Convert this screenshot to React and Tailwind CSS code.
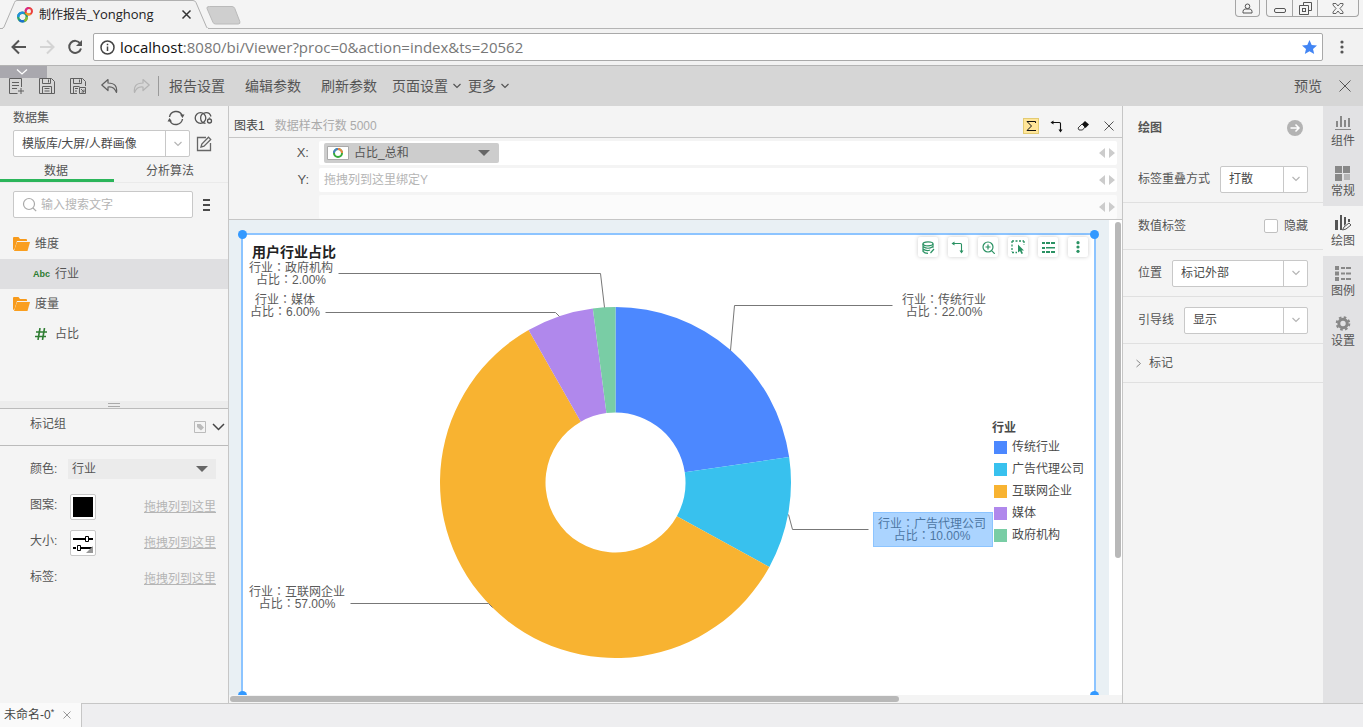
import { useState } from 'react';

const slices = [
  { name: '传统行业', value: 22, color: '#4c88ff' },
  { name: '广告代理公司', value: 10, color: '#38c1ee' },
  { name: '互联网企业', value: 57, color: '#f8b331' },
  { name: '媒体', value: 6, color: '#b088ec' },
  { name: '政府机构', value: 2, color: '#79cda5' },
];

// label anchors and leader lines, in chart coordinates
const labels = [
  { name: '传统行业', value: '22.00%', x: 701, y: 69, line: '649,70 491,70 487,115' },
  { name: '广告代理公司', value: '10.00%', x: 689, y: 293, line: '625,294 549,294 545,279', active: true },
  { name: '互联网企业', value: '57.00%', x: 54, y: 361, line: '107,368 245,368 249,372' },
  { name: '媒体', value: '6.00%', x: 42, y: 69, line: '82,77 312,77 316,81' },
  { name: '政府机构', value: '2.00%', x: 48, y: 37, line: '95,38 357,38 361,72' },
];

const CX = 372.5;
const CY = 247.5;
const OUTER = 175.5;
const INNER = 70;

const point = (radius, turn) => {
  const a = turn * Math.PI * 2;
  return `${CX + radius * Math.sin(a)},${CY - radius * Math.cos(a)}`;
};

const buildArcs = () => {
  const total = slices.reduce((sum, s) => sum + s.value, 0);
  let start = 0;
  return slices.map((s) => {
    const end = start + s.value / total;
    const large = end - start > 0.5 ? 1 : 0;
    const d = `M${point(OUTER, start)} A${OUTER},${OUTER} 0 ${large} 1 ${point(OUTER, end)} L${point(INNER, end)} A${INNER},${INNER} 0 ${large} 0 ${point(INNER, start)} Z`;
    start = end;
    return { ...s, d };
  });
};

const Svg = ({ w = 16, h = w, className = '', children, ...rest }) => (
  <svg
    width={w}
    height={h}
    viewBox={`0 0 ${w} ${h}`}
    fill="none"
    stroke="currentColor"
    className={`shrink-0 ${className}`}
    aria-hidden="true"
    {...rest}
  >
    {children}
  </svg>
);

const Chevron = ({ className = '' }) => (
  <Svg w={10} h={6} className={className}>
    <path d="M1.5 1 5 4.5 8.5 1" strokeWidth="1.2" />
  </Svg>
);

const Caret = () => (
  <Svg w={12} h={6} className="text-[#666]">
    <path d="M0 0h12L6 6z" fill="currentColor" stroke="none" />
  </Svg>
);

const Cross = ({ size = 14, className = '' }) => (
  <Svg w={size} className={className}>
    <path d={`M1.5 1.5 ${size - 1.5} ${size - 1.5}M${size - 1.5} 1.5 1.5 ${size - 1.5}`} />
  </Svg>
);

const SwapIcon = ({ className = '' }) => (
  <Svg w={14} className={className}>
    <path d="M2 3.5h7.5q1 0 1 1v7" strokeWidth="1.1" />
    <path d="M3.500 1.500v4L.5 3.5zM8.500 10.500h4l-2 3z" fill="currentColor" stroke="none" />
  </Svg>
);

const Select = ({ id, value, className = '' }) => (
  <span className={`flex h-[27px] border border-[#c8c8c8] rounded-xs bg-white ${className}`}>
    <select id={id} className="appearance-none flex-1 min-w-0 pl-2 bg-transparent outline-none text-[#4a4a4a]">
      <option>{value}</option>
    </select>
    <span className="w-6 border-l border-[#c8c8c8] flex items-center justify-center text-[#b5b5b5]">
      <Chevron />
    </span>
  </span>
);

const BrowserBar = () => (
  <header className="bg-[#f4f4f4] text-[#222] font-['Open_Sans','Noto_Sans_CJK_SC',sans-serif]">
    <div className="flex items-start h-[29px] border-b border-[#b4b4b4]">
      <div className="relative w-[210px] h-[29px] shrink-0">
        <svg width="210" height="29" viewBox="0 0 210 29" className="absolute top-0 left-0" aria-hidden="true">
          <path d="M0 28.500H1.500Q3.500 28.500 4 27L14.500 2.500Q15 .5 17 .5H193Q195 .5 196 2.500L206.500 27Q207 28.500 209 28.500" fill="#f2f2f2" stroke="#b0b0b0" />
          <path d="M3 28.500H208" stroke="#f2f2f2" />
        </svg>
        <div className="relative flex items-center h-[29px] pl-4 pr-[18px]">
          <Svg w={18} className="mr-[5px]" strokeWidth="2.400">
            <circle cx="6.500" cy="11" r="4.300" stroke="#2aa36b" />
            <path d="M2.200 11a4.300 4.300 0 0 1 6-4" stroke="#1f8fe0" />
            <path d="M3.500 14a4.300 4.300 0 0 0 5 .8" stroke="#1b6fd0" />
            <path d="M10.800 11a4.300 4.300 0 0 1-2.500 4" stroke="#8dbb34" />
            <circle cx="12.800" cy="5.200" r="3.200" stroke="#ea3f3f" strokeWidth="2" />
            <path d="M10 6.800a3.200 3.200 0 0 0 4.500 1.200" stroke="#f6a21c" strokeWidth="2" />
            <path d="M9.600 5.200a3.200 3.200 0 0 1 3.200-3.200" stroke="#d6278c" strokeWidth="2" />
          </Svg>
          <span className="flex-1 text-[13px] whitespace-nowrap">
            <span className="text-xs">制作报告</span>_Yonghong
          </span>
          <button aria-label="关闭标签页"><Cross size={11} className="text-[#333] [stroke-width:1.5]" /></button>
        </div>
      </div>
      <button aria-label="新标签页" className="-ml-1 mt-[6px]">
        <Svg w={36} h={19}>
          <path d="M3.500.5H26q2 0 2.800 2l5 13q.7 2.500-1.500 2.500H9.500q-2 0-2.700-2L1 2.500Q.5.5 3 .5z" fill="#cfcfcf" stroke="#bababa" />
        </Svg>
      </button>
      <div className="ml-auto flex text-[#555]">
        <button aria-label="用户" className="w-[25px] h-[17px] mr-[6px] border border-t-0 border-[#a5a5a5] rounded-b flex justify-center items-center">
          <Svg w={11}>
            <circle cx="5.500" cy="3.300" r="2.300" />
            <path d="M1 10V8.500q0-2 2-2.500h5q2 .5 2 2.500V10z" />
          </Svg>
        </button>
        <div className="flex h-[17px] mr-1 border border-t-0 border-[#a5a5a5] rounded-b">
          <button aria-label="最小化" className="w-[25px] flex justify-center items-center pt-1">
            <Svg w={12} h={5}><rect x=".5" y=".5" width="11" height="4" rx="1.500" /></Svg>
          </button>
          <button aria-label="还原" className="w-[25px] border-l border-[#a5a5a5] flex justify-center items-center">
            <Svg w={13}>
              <path d="M4.500 3.500v-3h8v8h-3M.5 3.500h9v9h-9z" />
              <rect x="3.500" y="6.500" width="3" height="3" />
            </Svg>
          </button>
          <button aria-label="关闭窗口" className="w-[41px] border-l border-[#a5a5a5] flex justify-center items-center">
            <Svg w={12} h={11}>
              <path d="M1 .5h3l2 2.500 2-2.500h3v1.500L8 5.500 11 9v1.500H8L6 8l-2 2.500H1V9l3-3.500L1 2z" strokeWidth=".9" />
            </Svg>
          </button>
        </div>
      </div>
    </div>
    <div className="flex items-center h-[37px] border-b border-[#b4b4b4] bg-[#f2f2f2]">
      <button aria-label="后退" className="ml-[11px] text-[#555]">
        <Svg w={16} strokeWidth="2"><path d="M15 8H2M8 1.500 1.500 8 8 14.500" /></Svg>
      </button>
      <button aria-label="前进" className="ml-3 text-[#d4d4d4]">
        <Svg w={16} strokeWidth="2"><path d="M1 8h13M8 1.500 14.500 8 8 14.500" /></Svg>
      </button>
      <button aria-label="刷新" className="ml-3 text-[#555]">
        <Svg w={16} strokeWidth="2">
          <path d="M13.200 4.500A6 6 0 1 0 14 9.500" />
          <path d="M15 1v6H9z" fill="currentColor" stroke="none" />
        </Svg>
      </button>
      <div className="flex-1 flex items-center h-7 ml-[10px] pl-[6px] pr-1 bg-white border border-[#a9a9a9] rounded-xs">
        <Svg w={15} className="text-[#444]" strokeWidth="1.500">
          <circle cx="7.500" cy="7.500" r="6.500" />
          <path d="M7.500 6.500V11M7.500 3.800v1.500" />
        </Svg>
        <div className="flex-1 ml-[5px] pb-px text-[15px] text-[#777]" role="textbox" aria-label="地址">
          <span className="text-[#111]">localhost</span>:8080/bi/Viewer?proc=0&amp;action=index&amp;ts=20562
        </div>
        <button aria-label="收藏" className="text-[#4285f4]">
          <Svg w={17} h={16}>
            <path d="M8.500 1l2.200 4.900 5.300.5-4 3.500 1.200 5.200-4.700-2.800-4.700 2.800L5 9.900 1 6.400l5.300-.5z" fill="currentColor" stroke="none" />
          </Svg>
        </button>
      </div>
      <button aria-label="菜单" className="mx-4 text-[#555]">
        <Svg w={8} h={14} fill="currentColor" stroke="none">
          <circle cx="3" cy="2" r="1.600" /><circle cx="3" cy="7" r="1.600" /><circle cx="3" cy="12" r="1.600" />
        </Svg>
      </button>
    </div>
  </header>
);

const Toolbar = () => (
  <nav className="relative flex items-center h-10 pl-2 pr-[11px] bg-[#d6d6d6] text-sm text-[#555]">
    <button aria-label="收起" className="absolute top-0 left-0 w-[47px] h-3 bg-[#a9a8ae] text-white flex justify-center items-center">
      <Svg w={12} h={6} className="mr-[3px]"><path d="M1 .5 6 5l5-4.500" strokeWidth="1.300" /></Svg>
    </button>
    <div className="flex items-center gap-[15px] text-[#5f5f5f]">
      <button aria-label="新建">
        <Svg w={16}>
          <path d="M13.500 9V.5h-12v15h8M4 4.500h7M4 7.500h7M4 10.500h5M13 10v6M10 13h6" />
        </Svg>
      </button>
      <button aria-label="保存">
        <Svg w={16}>
          <path d="M.5.5h12l3 3v12H.500zM3.500.5v5h8v-5M9.500 1.500v3M3.500 15.500v-7h9v7M5.500 10.500h5M5.500 13h5" />
        </Svg>
      </button>
      <button aria-label="另存为">
        <Svg w={16}>
          <path d="M7 15.500H.500V.5h12l3 3V8M3.500.5v5h8v-5M9.500 1.500v3M3.500 15.500v-7h6M5 10.500h3M5 13h2" />
          <path d="M9.500 9.500h6v6h-6zM11 11l3 3M14 11.500V14h-2.500" />
        </Svg>
      </button>
      <button aria-label="撤销">
        <Svg w={17} h={16}>
          <path d="M7 1.500.8 7 7 12.500V9q6-1 8.500 5.500Q17 5 7 5z" strokeWidth="1.200" strokeLinejoin="round" />
        </Svg>
      </button>
      <button aria-label="重做" className="text-[#b3b3b3]">
        <Svg w={17} h={16}>
          <path d="M10 1.500 16.200 7 10 12.500V9Q4 8 1.500 14.500 0 5 10 5z" strokeWidth="1.200" strokeLinejoin="round" />
        </Svg>
      </button>
    </div>
    <span className="w-px h-5 ml-2 mr-[10px] bg-[#9a9a9a]" />
    <div className="flex items-center gap-5">
      <button>报告设置</button>
      <button>编辑参数</button>
      <button>刷新参数</button>
    </div>
    <div className="flex items-center gap-[6px] ml-[15px]">
      <button className="flex items-center gap-1">页面设置<Chevron /></button>
      <button className="flex items-center gap-1">更多<Chevron /></button>
    </div>
    <button className="ml-auto mr-4">预览</button>
    <button aria-label="关闭"><Cross size={14} /></button>
  </nav>
);

const Folder = () => (
  <Svg w={17} h={14} stroke="none">
    <path d="M0 1q0-1 1-1h4.500l1.500 2H13q1 0 1 1v1H4L1.500 12 0 13z" fill="#f79a1b" />
    <path d="M4 5h13l-2.500 9H1z" fill="#fa9f1f" />
  </Svg>
);

const DropHint = () => <button className="ml-auto text-[#b5b5b5] underline">拖拽列到这里</button>;

const LeftPanel = () => {
  const [tab, setTab] = useState('data');
  return (
    <aside className="w-[229px] shrink-0 flex flex-col border-r border-[#c6c6c6]">
      <div className="flex items-center h-6 pl-[13px] pr-[14px] text-[#555]">
        <label htmlFor="dataset" className="flex-1">数据集</label>
        <button aria-label="刷新数据集" className="mr-[9px]">
          <Svg w={18} strokeWidth="1.400">
            <path d="M2.500 8A6.700 6.700 0 0 1 15 6M15.500 10A6.700 6.700 0 0 1 3 12" />
            <path d="M17.500 5.500h-4.500l2.500 3.500zM.5 12.500H5L2.500 9z" fill="currentColor" stroke="none" />
          </Svg>
        </button>
        <button aria-label="关联数据集">
          <Svg w={20} h={14} strokeWidth="1.300">
            <circle cx="6.500" cy="7" r="5.300" />
            <path d="M11.500 12.300A5.300 5.300 0 1 1 17 5.500" />
            <circle cx="15.500" cy="10" r="2" /><path d="M15.500 6.500v1" />
          </Svg>
        </button>
      </div>
      <div className="flex items-center pl-[13px] pr-4">
        <Select id="dataset" value="模版库/大屏/人群画像" className="flex-1" />
        <button aria-label="编辑数据集" className="ml-[6px] text-[#666]">
          <Svg w={16} strokeWidth="1.300">
            <path d="M10 1.500H1.500v13h13V7M5 11l.8-3L12.500 1.200l2.200 2.200L8 10.200z" />
          </Svg>
        </button>
      </div>
      <div className="flex h-[26px] border-b border-[#eaeaea] text-[#555]" role="tablist">
        {[['data', '数据'], ['algo', '分析算法']].map(([key, text]) => (
          <button
            key={key}
            role="tab"
            aria-selected={tab === key}
            onClick={() => setTab(key)}
            className={`flex-1 h-[25px] pt-[6px] pr-[2px] border-b-3 ${tab === key ? 'border-[#2bb55a]' : 'border-transparent'}`}
          >
            {text}
          </button>
        ))}
      </div>
      <div className="flex items-center pt-2 pl-[13px] pr-[18px]">
        <label className="flex flex-1 min-w-0 items-center gap-1 h-[27px] pl-2 border border-[#c8c8c8] rounded-xs bg-white text-[#aaa]">
          <Svg w={15} strokeWidth="1.200">
            <circle cx="7" cy="7" r="5.500" /><path d="M11 11l3.200 3.200" />
          </Svg>
          <input aria-label="搜索" placeholder="输入搜索文字" className="flex-1 min-w-0 outline-none placeholder:text-[#b5b5b5]" />
        </label>
        <button aria-label="更多选项" className="ml-[10px] text-[#4a4a4a]">
          <Svg w={7} h={12} stroke="none" fill="currentColor"><path d="M0 0h7v2H0zM0 5h7v2H0zM0 10h7v2H0z" /></Svg>
        </button>
      </div>
      <ul className="pt-[11px] text-[#555]">
        <li className="flex items-center gap-[5px] h-[30px] pl-[13px]"><Folder />维度</li>
        <li className="flex items-center gap-[5px] h-[30px] pl-[33px] bg-[#dfdfe1]">
          <b className="w-[17px] text-[9px] text-[#2e7d32]">Abc</b>行业
        </li>
        <li className="flex items-center gap-[5px] h-[30px] pl-[13px]"><Folder />度量</li>
        <li className="flex items-center gap-2 h-[30px] pl-[35px]">
          <Svg w={12} className="text-[#2e7d32]" strokeWidth="1.600"><path d="M5 0 3 12M9.500 0l-2 12M1 4h11M0 8.500h11" /></Svg>
          占比
        </li>
      </ul>
      <div className="mt-auto h-2 bg-[#ececec] border-b border-[#bbb] flex justify-center items-center">
        <span className="w-3 h-1 border-y border-[#aaa]" />
      </div>
      <section className="h-[294px] text-[#555]">
        <div className="flex items-center h-[37px] pl-[30px] pr-[3px] border-b border-[#bbb]">
          <h2 className="flex-1 pb-[6px]">标记组</h2>
          <Svg w={12} className="text-[#bbb] mr-[6px]">
            <path d="M.5.5h11v11H.500z" /><path d="M3 3h3.500L10 6.500 7 9.500 3 6z" fill="currentColor" stroke="none" />
          </Svg>
          <Svg w={13} h={8} className="text-[#444]"><path d="M1 1l5.500 5.500L12 1" strokeWidth="1.500" /></Svg>
        </div>
        <div className="pl-[30px] pr-3">
          <div className="flex items-center h-[43px] pt-[3px]">
            <label htmlFor="color" className="w-[38px]">颜色:</label>
            <span className="flex flex-1 items-center h-5 pr-2 bg-[#ebebeb]">
              <select id="color" className="appearance-none flex-1 pl-1 outline-none"><option>行业</option></select>
              <Caret />
            </span>
          </div>
          <div className="flex items-center h-9">
            <span className="w-10 pb-1">图案:</span>
            <button aria-label="图案" className="p-px border border-[#c8c8c8] rounded-xs bg-white">
              <Svg w={22} stroke="none"><path d="M1 1h20v20H1z" fill="#000" /></Svg>
            </button>
            <DropHint />
          </div>
          <div className="flex items-center h-9">
            <span className="w-10 pb-1">大小:</span>
            <button aria-label="大小" className="p-px border border-[#c8c8c8] rounded-xs bg-white">
              <Svg w={22} stroke="#000">
                <path d="M1 7h12M17 7h4M1 16h3M8 16h13" strokeWidth="2" />
                <path d="M13.500 4.500h3v5h-3zM5.500 13.500h3v5h-3z" />
                <path d="M21 14v7h-7z" fill="#999" stroke="none" />
              </Svg>
            </button>
            <DropHint />
          </div>
          <div className="flex items-center h-9">
            <span className="w-10 pb-1">标签:</span>
            <DropHint />
          </div>
        </div>
      </section>
    </aside>
  );
};

const Pager = () => (
  <Svg w={16} h={10} className="text-[#ccc]" stroke="none" fill="currentColor">
    <path d="M6 0v10L0 5zM10 0v10l6-5z" />
  </Svg>
);

const BindRow = ({ label, children, empty }) => (
  <div className="flex items-center h-6 text-[#555]">
    <span className="w-[90px] pr-[10px] text-right text-[13px]">{label}</span>
    <div className={`flex flex-1 items-center justify-between h-6 mr-[5px] pl-[5px] pr-[2px] rounded-xs ${empty ? 'bg-[#fbfbfb]' : 'bg-white'}`}>
      <div>{children}</div>
      <Pager />
    </div>
  </div>
);

const bindButton = 'w-4 h-4 flex items-center justify-center';

const BindPanel = () => (
  <section>
    <div className="flex items-center h-8 pl-[5px] pr-[5px] pt-2 border-b border-[#c6c6c6] text-[#444]">
      <h2>图表1</h2>
      <span className="flex-1 ml-[10px] text-[#aaa]">数据样本行数 5000</span>
      <div className="flex items-center gap-[10px] text-[#111]">
        <button aria-label="汇总" className={`${bindButton} bg-[#ffe599] border border-[#e3cb72]`}>
          <Svg w={12}><path d="M10.500 3V1.500H2L6.500 6 2 10.500h9" /></Svg>
        </button>
        <button aria-label="行列互换" className={bindButton}><SwapIcon /></button>
        <button aria-label="清除" className={bindButton}>
          <Svg w={12} h={10}>
            <path d="M1 7 5 3l3 3-2.500 3H2z" strokeWidth=".8" /><path d="M5 3 8 0l4 3.500L8.500 7z" fill="currentColor" stroke="none" />
          </Svg>
        </button>
        <button aria-label="关闭" className={`${bindButton} text-[#555]`}><Cross size={12} /></button>
      </div>
    </div>
    <div className="flex flex-col gap-[3px] pt-[3px] border-b border-[#c6c6c6]">
      <BindRow label="X:">
        <button className="flex items-center w-[175px] h-5 pl-[3px] pr-[9px] bg-[#cdcdcd] rounded-xs text-left">
          <Svg w={22} h={14}>
            <path d="M.5.5h21v13H.500z" fill="#fff" stroke="#aaa" />
            <circle cx="11" cy="7" r="4" stroke="#35ab3a" strokeWidth="2" />
            <path d="M11 3a4 4 0 0 1 4 4" stroke="#ec8544" strokeWidth="2" />
            <path d="M7 7a4 4 0 0 1 4-4" stroke="#4b7fc4" strokeWidth="2" />
          </Svg>
          <span className="flex-1 ml-[5px]">占比_总和</span>
          <Caret />
        </button>
      </BindRow>
      <BindRow label="Y:"><span className="text-[#b5b5b5]">拖拽列到这里绑定Y</span></BindRow>
      <BindRow empty />
    </div>
  </section>
);

const Colon = () => <tspan fontFamily="Noto Sans CJK TC">：</tspan>;

const DonutChart = () => (
  <svg viewBox="0 0 851 460" preserveAspectRatio="xMinYMin meet" className="block w-full" role="img" aria-label="用户行业占比">
    {buildArcs().map((arc) => <path key={arc.name} d={arc.d} fill={arc.color} />)}
    {labels.map((l) => (
      <g key={l.name} textAnchor="middle" fontSize="12" fill="#5a5a5a">
        <polyline points={l.line} fill="none" stroke="#777" transform="translate(.5 .5)" />
        <text x={l.x} y={l.y}>行业<Colon />{l.name}</text>
        <text x={l.x} y={l.y + 12}>占比<Colon />{l.value}</text>
        {l.active && <rect x={l.x - 58.5} y={l.y - 15.500} width="119" height="34" fill="#3d9bff" fillOpacity=".43" stroke="#8cc4ff" />}
      </g>
    ))}
  </svg>
);

const ChartTool = ({ label, children }) => (
  <button aria-label={label} className="w-5 h-5 rounded-xs bg-white shadow-[0_0_4px_rgba(0,0,0,0.2)] flex items-center justify-center">
    {children}
  </button>
);

const Handle = ({ className }) => <span className={`absolute size-[9px] rounded-full bg-[#3399ff] ${className}`} />;

const Canvas = () => (
  <section className="flex-1 min-h-0 flex flex-col">
    <div className="flex-1 min-h-0 flex">
      <div className="flex-1 min-w-0 pl-3 pr-[13px] pt-[13px] bg-[#e9f0f4] overflow-hidden">
        <div className="relative border-2 border-[#8cc4ff] bg-white">
          <DonutChart />
          <div className="absolute inset-x-0 top-0 flex justify-between pl-[9px] pr-[6px] pt-[2px]">
            <h1 className="pt-[5px] text-sm leading-5 font-bold text-[#222]">用户行业占比</h1>
            <div className="flex gap-[10px] text-[#2a9263]">
              <ChartTool label="数据">
                <Svg w={13} strokeWidth="1.200">
                  <ellipse cx="6" cy="2.800" rx="5" ry="2" />
                  <path d="M1 2.800v7.500q1.500 2 5 2M11 2.800v4M1 5.500q5 3.500 10 0M1 8q3.500 2.500 7 1M8.500 12l3.500-4" />
                </Svg>
              </ChartTool>
              <ChartTool label="互换"><SwapIcon /></ChartTool>
              <ChartTool label="放大">
                <Svg w={13} strokeWidth="1.200"><circle cx="6" cy="6" r="5" /><path d="M9.800 9.800l3 3M6 3.500v5M3.500 6h5" /></Svg>
              </ChartTool>
              <ChartTool label="选择">
                <Svg w={14}>
                  <path d="M1 1h12M1 1v11M13 1v4M1 12.500h5" strokeDasharray="2 1.500" strokeWidth="1.300" />
                  <path d="M7 4.500v8l2-1.500 1.500 3 1.500-.8-1.500-2.700h2.500z" fill="currentColor" stroke="none" />
                </Svg>
              </ChartTool>
              <ChartTool label="列表">
                <Svg w={13} h={11} stroke="none" fill="currentColor">
                  <path d="M0 0h3v2H0zM4 0h4v2H4zM9 0h4v2H9zM0 5h3v2H0zM4 5h9v1.500H4zM0 9h3v2H0zM4 9h4v2H4zM9 9h4v2H9z" />
                </Svg>
              </ChartTool>
              <ChartTool label="更多">
                <Svg w={4} h={12} stroke="none" fill="currentColor">
                  <circle cx="2" cy="1.700" r="1.600" /><circle cx="2" cy="6" r="1.600" /><circle cx="2" cy="10.300" r="1.600" />
                </Svg>
              </ChartTool>
            </div>
          </div>
          <div className="absolute right-[10px] top-[185px] text-[#4a4a4a]">
            <h3 className="-ml-[2px] font-bold leading-4">行业</h3>
            <ul>
              {slices.map((s) => (
                <li key={s.name} className="flex items-center gap-[5px] h-[22px]">
                  <span className="size-[13px]" style={{ backgroundColor: s.color }} />
                  {s.name}
                </li>
              ))}
            </ul>
          </div>
          <Handle className="-top-[5px] -left-[5px]" />
          <Handle className="-top-[5px] -right-[5px]" />
          <Handle className="-bottom-[5px] -left-[5px]" />
          <Handle className="-bottom-[5px] -right-[5px]" />
        </div>
      </div>
      <div className="w-[13px] pl-[6px] pt-[2px] bg-white">
        <div className="w-[6px] h-[71%] rounded-full bg-[#b8b8b8]" />
      </div>
    </div>
    <div className="h-2 pl-px pt-px bg-[#f4f4f4]">
      <div className="w-3/4 h-[6px] rounded-full bg-[#b8b8b8]" />
    </div>
  </section>
);

const SettingRow = ({ id, label, value }) => (
  <div className="flex items-center gap-[10px] h-[47px] pl-[15px] pr-[15px] border-b border-[#e0e0e0]">
    <label htmlFor={id} className="whitespace-nowrap">{label}</label>
    <Select id={id} value={value} className="flex-1 min-w-0" />
  </div>
);

const SettingsPanel = () => (
  <aside className="w-[201px] shrink-0 border-l border-[#c6c6c6] text-[#555]">
    <div className="flex items-center justify-between h-[50px] pb-[6px] pl-[15px] pr-5">
      <h2 className="font-bold">绘图</h2>
      <button aria-label="收起面板" className="text-[#b3b3b3]">
        <Svg w={16} stroke="none">
          <circle cx="8" cy="8" r="8" fill="currentColor" />
          <path d="M3.500 8h8M8.500 4.500 12 8l-3.500 3.500" stroke="#fff" strokeWidth="1.500" />
        </Svg>
      </button>
    </div>
    <SettingRow id="overlap" label="标签重叠方式" value="打散" />
    <div className="flex items-center justify-between h-[47px] pl-[15px] pr-[15px] border-b border-[#e0e0e0]">
      <span>数值标签</span>
      <label className="flex items-center gap-[6px]">
        <input type="checkbox" className="appearance-none size-[14px] border border-[#c0c0c0] rounded-xs bg-white" />
        隐藏
      </label>
    </div>
    <SettingRow id="position" label="位置" value="标记外部" />
    <SettingRow id="guide" label="引导线" value="显示" />
    <button className="flex items-center gap-[7px] w-full h-[39px] pl-3 border-b border-[#e0e0e0]">
      <Svg w={7} h={9} className="text-[#888]"><path d="M1.500 1 5.500 4.500 1.500 8" /></Svg>
      标记
    </button>
  </aside>
);

const railItems = [
  {
    name: '组件',
    icon: <path d="M2 6h2v6H2zM6 1h2v11H6zM10 5h2v7h-2zM14 3h2v9h-2zM1 14h16v1H1z" />,
  },
  {
    name: '常规',
    icon: (
      <>
        <path d="M1 1h7v7H1zM9 1h7v7H9zM1 9h7v7H1z" />
        <path d="M10 9h6v6h-6z" opacity=".5" />
      </>
    ),
  },
  {
    name: '绘图',
    icon: (
      <>
        <path d="M1 5h3v10H1zM6 0h2v15H6zM10 2h2v7l-2 2zM14 4h2v3h-2z" />
        <path d="M8.500 15 10 12l5-4 2 2-5 4z" fill="none" stroke="currentColor" />
      </>
    ),
  },
  {
    name: '图例',
    icon: <path d="M1 1h4v4H1zM1 6.500h4v4H1zM1 12h4v4H1zM7 2h4v2H7zM12 2h5v2h-5zM7 7.500h4v2H7zM12 7.500h5v2h-5zM7 13h4v2H7zM12 13h5v2h-5z" />,
  },
  {
    name: '设置',
    icon: (
      <>
        <circle cx="9" cy="8.500" r="4.200" fill="none" stroke="currentColor" strokeWidth="3" />
        <circle cx="9" cy="8.500" r="6.300" fill="none" stroke="currentColor" strokeWidth="2" strokeDasharray="2.6 2.350" />
      </>
    ),
  },
];

const Rail = () => {
  const [active, setActive] = useState('绘图');
  return (
    <nav className="w-10 shrink-0 bg-[#e2e2e4]">
      {railItems.map((item) => (
        <button
          key={item.name}
          onClick={() => setActive(item.name)}
          className={`flex flex-col items-center gap-px w-full h-[50px] pt-[9px] text-[#555] ${active === item.name ? 'bg-[#f4f4f4]' : ''}`}
        >
          <Svg w={18} h={17} fill="currentColor" stroke="none" className={active === item.name ? 'text-[#555]' : 'text-[#888]'}>
            {item.icon}
          </Svg>
          {item.name}
        </button>
      ))}
    </nav>
  );
};

const App = () => {
  return (
    <div className="flex flex-col h-screen overflow-hidden bg-[#f4f4f4] text-xs font-['Liberation_Sans','Noto_Sans_CJK_SC',sans-serif]">
      <BrowserBar />
      <Toolbar />
      <div className="flex flex-1 min-h-0">
        <LeftPanel />
        <main className="flex-1 min-w-0 flex flex-col">
          <BindPanel />
          <Canvas />
        </main>
        <SettingsPanel />
        <Rail />
      </div>
      <footer className="flex h-6 bg-[#eeeef0]">
        <div className="flex items-center gap-2 px-1 pr-[9px] bg-[#fafafa] border-r border-[#c6c6c6] text-[#444]">
          <span>未命名-0<sup>*</sup></span>
          <button aria-label="关闭报告" className="text-[#999]"><Cross size={10} /></button>
        </div>
        <div className="flex-1 border-t border-[#c6c6c6]" />
      </footer>
    </div>
  );
};

export default App;
